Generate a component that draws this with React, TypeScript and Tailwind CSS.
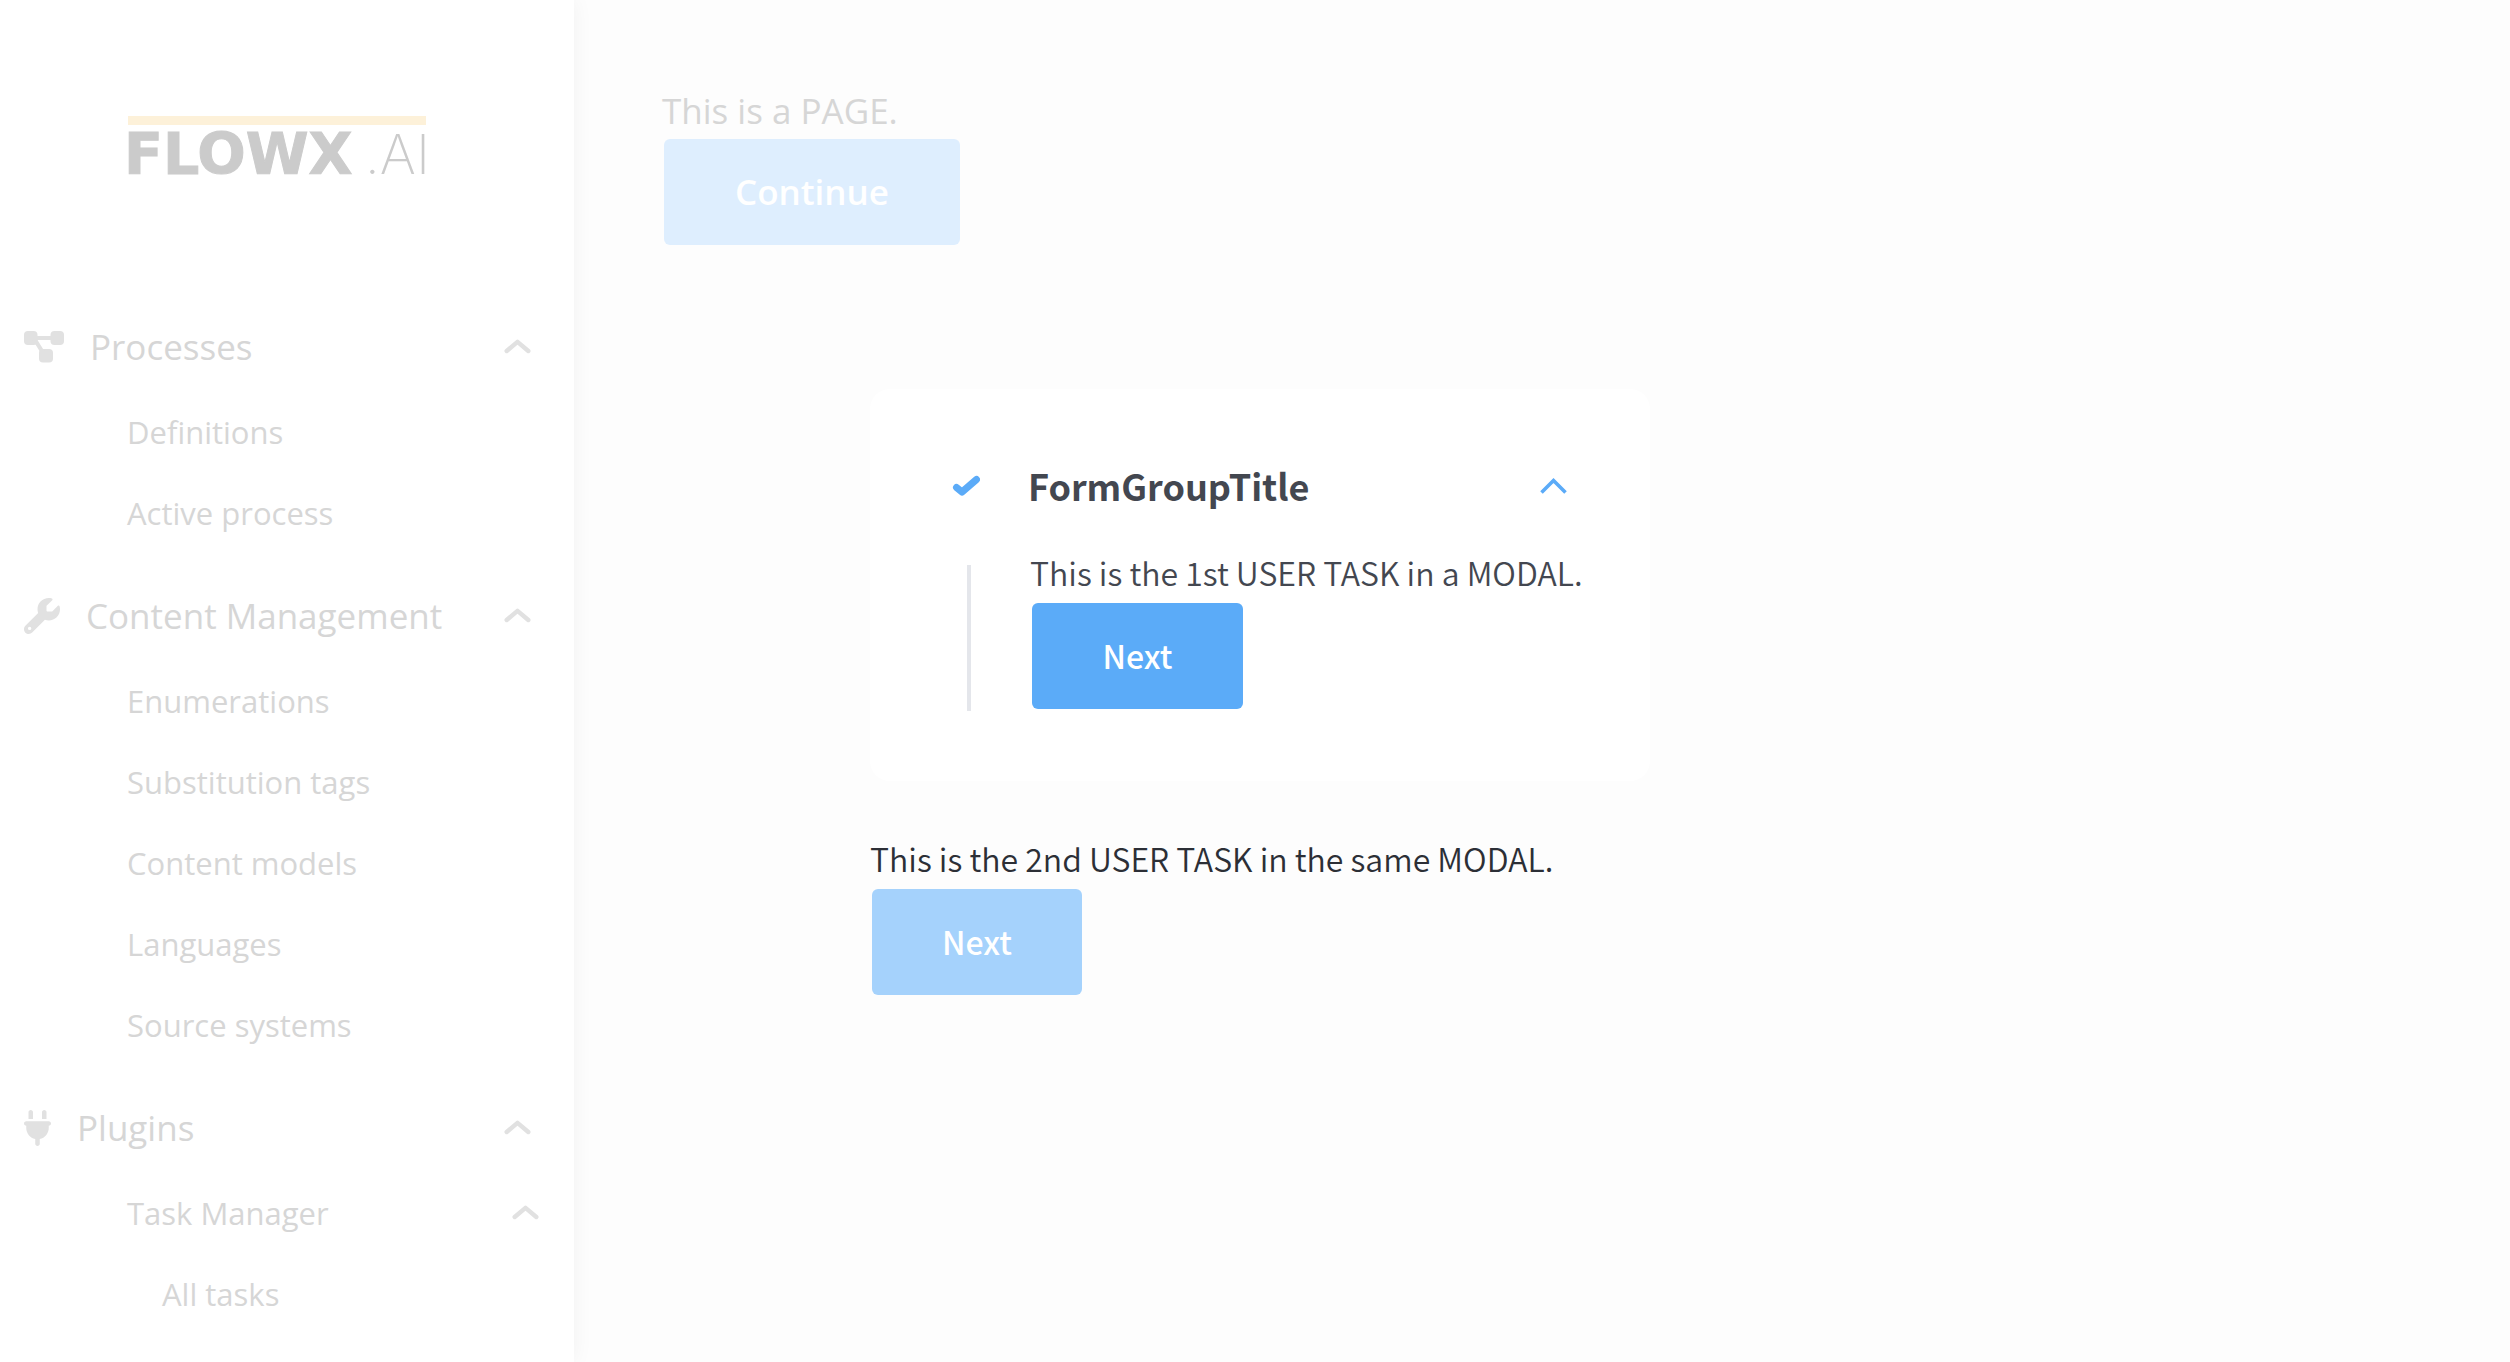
import type { ReactNode } from "react";
import { FaPlug, FaWrench } from "react-icons/fa6";

type Item = { label: string; children?: string[] };

function DiagramIcon() {
  return (
    <svg viewBox="0 0 40 32" className="h-8 w-10" fill="currentColor" aria-hidden="true">
      <rect x="0" y="0" width="13.5" height="14" rx="4" />
      <rect x="26.5" y="0" width="13.5" height="14" rx="4" />
      <rect x="15" y="18" width="14" height="13.5" rx="4" />
      <path d="M10 7 H30 M10.5 8 L18.5 21" stroke="currentColor" strokeWidth="4.2" fill="none" />
    </svg>
  );
}

function Chevron() {
  return (
    <svg viewBox="0 0 27 15" className="h-[15px] w-[27px] shrink-0" fill="none" stroke="#e1e1e1" strokeWidth="4.4" strokeLinecap="round" strokeLinejoin="round" aria-hidden="true">
      <path d="M2.7 12 L13.5 2.8 L24.3 12" />
    </svg>
  );
}

function NavGroup({ icon, title, items }: { icon: ReactNode; title: string; items: Item[] }) {
  return (
    <section className="mb-[18px]">
      <button type="button" className="flex h-[89px] w-full items-center gap-[26px] pr-[43px] pl-6 text-left">
        <span className="shrink-0 text-[#e1e1e1]">{icon}</span>
        <span className="flex-1 text-[35px] leading-[48px]">{title}</span>
        <Chevron />
      </button>
      <ul>
        {items.map((item) => (
          <li key={item.label}>
            {item.children ? (
              <>
                <button type="button" className="flex h-[81px] w-full items-center justify-between pr-[35px] pl-[127px] text-left">
                  <span>{item.label}</span>
                  <Chevron />
                </button>
                <ul>
                  {item.children.map((child) => (
                    <li key={child}>
                      <a href="#" className="flex h-[81px] items-center pl-[162px]">{child}</a>
                    </li>
                  ))}
                </ul>
              </>
            ) : (
              <a href="#" className="flex h-[81px] items-center pl-[127px]">{item.label}</a>
            )}
          </li>
        ))}
      </ul>
    </section>
  );
}

function Logo() {
  return (
    <div className="ml-32 w-[298px] pt-[116px]" aria-label="FLOWX.AI">
      <div className="h-[9px] bg-[#fdf1d9]" />
      <div className="flex h-[58px] items-center justify-between whitespace-nowrap leading-[58px] text-[#cbcbcb]">
        <span className="-ml-1 font-['DejaVu_Sans',sans-serif] text-[57px] font-bold [-webkit-text-stroke:1px_#cbcbcb]">FLOWX</span>
        <span className="-mr-1 font-['Inter',sans-serif] text-[55px] font-extralight">.AI</span>
      </div>
    </div>
  );
}

export default function App() {
  return (
    <div className="relative flex h-screen overflow-hidden bg-[#fdfdfd] font-['Open_Sans',sans-serif] text-[#d6d6d6]">
      <aside className="z-10 w-[574px] shrink-0 bg-white shadow-[0_0_20px_rgba(0,0,0,0.05)]">
        <Logo />
        <nav className="mt-[119px] text-[31px] leading-[44px]">
          <NavGroup
            icon={<DiagramIcon />}
            title="Processes"
            items={[{ label: "Definitions" }, { label: "Active process" }]}
          />
          <NavGroup
            icon={<FaWrench className="size-9" />}
            title="Content Management"
            items={[
              { label: "Enumerations" },
              { label: "Substitution tags" },
              { label: "Content models" },
              { label: "Languages" },
              { label: "Source systems" },
            ]}
          />
          <NavGroup
            icon={<FaPlug className="h-9 w-[27px]" />}
            title="Plugins"
            items={[{ label: "Task Manager", children: ["All tasks"] }]}
          />
        </nav>
      </aside>

      <main className="flex-1 pt-[87px] pl-[88px]">
        <p className="text-[35px] leading-[48px]">This is a PAGE.</p>
        <button type="button" className="mt-1 ml-[2px] h-[106px] w-[296px] rounded-md bg-[#deeefe] text-[35px] font-semibold text-white">
          Continue
        </button>
      </main>

      <div
        role="dialog"
        aria-label="FormGroupTitle"
        className="absolute inset-0 z-20 flex flex-col items-center pt-[389px] pl-[10px] font-['Noto_Sans_CJK_SC',sans-serif] text-[32px] leading-[48px] font-[350]"
      >
        <div className="w-[780px]">
          <section className="h-[392px] rounded-[20px] bg-white px-[82px] pt-[72px] text-[#434750]">
            <header className="flex h-12 items-center">
              <svg viewBox="0 0 28 22" className="h-[22px] w-7" fill="none" stroke="#5babf8" strokeWidth="7" strokeLinecap="round" strokeLinejoin="round" aria-hidden="true">
                <path d="M4.5 13.5 L10 18 L24.5 5.5" />
              </svg>
              <h2 className="ml-12 flex-1 text-[36px] leading-[48px] font-bold">FormGroupTitle</h2>
              <button type="button" aria-label="Collapse" className="flex">
                <svg viewBox="0 0 28 18" className="h-[18px] w-7" fill="none" stroke="#5babf8" strokeWidth="3.6">
                  <path d="M1.5 16.5 L13.5 4.5 L25.5 16.5" />
                </svg>
              </button>
            </header>
            <div className="mt-[39px] flex">
              <div className="mt-[17px] ml-[15px] h-[146px] w-1 shrink-0 bg-[#e4e6eb]" />
              <div className="ml-[59px] whitespace-nowrap">
                <p>This is the 1st USER TASK in a MODAL.</p>
                <button type="button" className="mt-[7px] ml-[2px] h-[106px] w-[211px] rounded-md bg-[#5babf8] pb-[2px] font-medium text-white">
                  Next
                </button>
              </div>
            </div>
          </section>
          <section className="mt-[53px] text-[#2c2f36]">
            <p>This is the 2nd USER TASK in the same MODAL.</p>
            <button type="button" disabled className="mt-[7px] ml-[2px] h-[106px] w-[210px] rounded-md bg-[#a5d2fc] pb-[2px] font-medium text-white">
              Next
            </button>
          </section>
        </div>
      </div>
    </div>
  );
}
